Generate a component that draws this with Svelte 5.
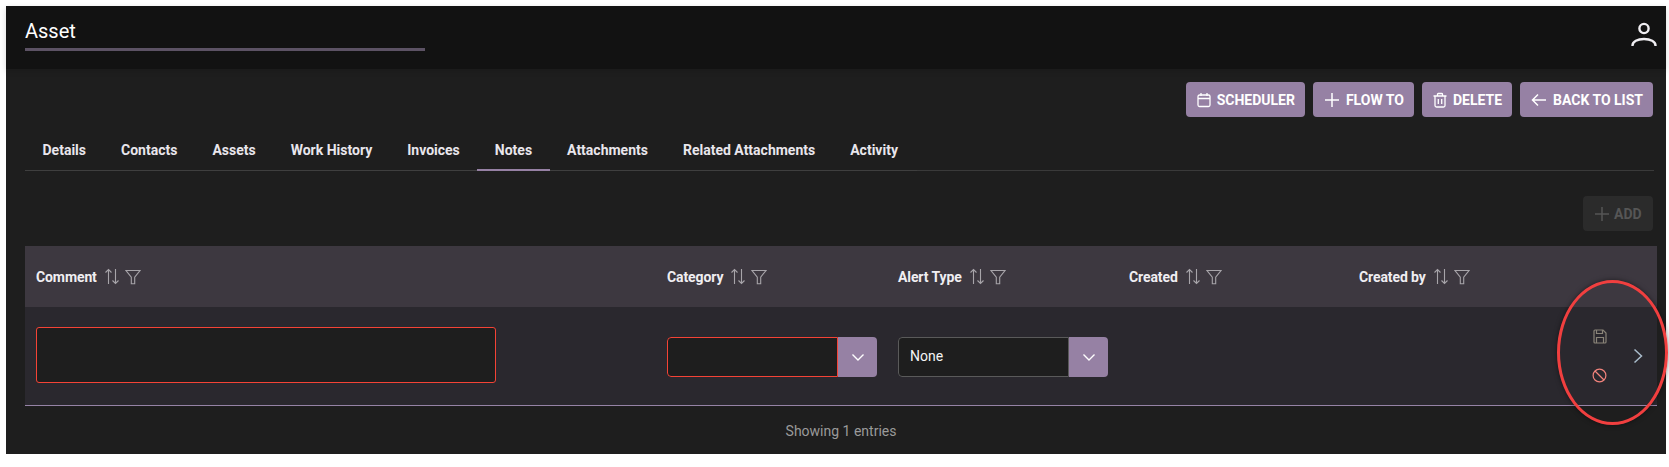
<script lang="ts">
	const tabs = ['Details', 'Contacts', 'Assets', 'Work History', 'Invoices', 'Notes', 'Attachments', 'Related Attachments', 'Activity'];
	const columns = ['Comment', 'Category', 'Alert Type', 'Created', 'Created by'];
	let activeTab = $state('Notes');
</script>

<div class="frame">
	<div class="page">
		<header class="topbar">
			<div class="title">Asset</div>
			<svg class="user" width="28" height="28" viewBox="0 0 28 28" fill="none" stroke="currentColor" stroke-width="2.4">
				<circle cx="14" cy="8.5" r="4.6" />
				<path d="M2.5 26v-.5c0-4 5-6.5 11.5-6.5s11.5 2.500 11.500 6.500v.5" />
			</svg>
		</header>

		<main class="content">
			<div class="actions">
				<button class="btn">
					<svg width="16" height="16" viewBox="0 0 16 16" fill="none" stroke="currentColor" stroke-width="1.3">
						<rect x="2" y="3" width="12" height="11.500" rx="1.500" />
						<path d="M2 6.500h12M5 1v3M11 1v3" />
					</svg>
					SCHEDULER
				</button>
				<button class="btn">
					<svg width="18" height="18" viewBox="0 0 18 18" fill="none" stroke="currentColor" stroke-width="1.500">
						<path d="M9 2v14M2 9h14" />
					</svg>
					FLOW TO
				</button>
				<button class="btn">
					<svg width="16" height="16" viewBox="0 0 16 16" fill="none" stroke="currentColor" stroke-width="1.300">
						<path d="M1.500 4h13M5.500 4V2.300c0-.5.4-.8.8-.8h3.400c.4 0 .8.3.8.8V4M3 4v9.500c0 .8.600 1.500 1.500 1.500h7c.9 0 1.500-.7 1.500-1.500V4M6.300 7v5M9.700 7v5" />
					</svg>
					DELETE
				</button>
				<button class="btn">
					<svg width="18" height="18" viewBox="0 0 18 18" fill="none" stroke="currentColor" stroke-width="1.500">
						<path d="M16 9H2.500M8 3.500 2.500 9 8 14.500" />
					</svg>
					BACK TO LIST
				</button>
			</div>

			<nav class="tabs">
				<div class="tablist">
					{#each tabs as tab}
						<button class="tab" class:active={tab === activeTab} onclick={() => (activeTab = tab)}>{tab}</button>
					{/each}
				</div>
			</nav>

			<div class="toolbar">
				<button class="btn add" disabled>
					<svg width="18" height="18" viewBox="0 0 18 18" fill="none" stroke="currentColor" stroke-width="1.500">
						<path d="M9 2v14M2 9h14" />
					</svg>
					ADD
				</button>
			</div>

			<div class="table">
				<div class="grid head">
					{#each columns as col}
						<div class="th">
							<span>{col}</span>
							<svg class="sort" width="16" height="17" viewBox="0 0 16 17" fill="none" stroke="currentColor" stroke-width="1.100">
								<path d="M4.500 16V1.500M1.500 4.500l3-3 3 3M11.500 1v14.500M8.500 12.500l3 3 3-3" />
							</svg>
							<svg class="funnel" width="16" height="16" viewBox="0 0 16 16" fill="none" stroke="currentColor" stroke-width="1.100">
								<path d="M1 1.500h14l-5.300 6.600v6.700H6.300V8.100z" />
							</svg>
						</div>
					{/each}
					<div></div>
				</div>

				<div class="grid row">
					<div class="td"><div class="textarea"></div></div>
					<div class="td">
						<div class="select invalid">
							<div class="value"></div>
							<div class="trigger">
								<svg width="14" height="14" viewBox="0 0 14 14" fill="none" stroke="currentColor" stroke-width="1.400"><path d="M1.500 4.500 7 10l5.500-5.500" /></svg>
							</div>
						</div>
					</div>
					<div class="td">
						<div class="select">
							<div class="value">None</div>
							<div class="trigger">
								<svg width="14" height="14" viewBox="0 0 14 14" fill="none" stroke="currentColor" stroke-width="1.400"><path d="M1.500 4.500 7 10l5.500-5.500" /></svg>
							</div>
						</div>
					</div>
					<div class="td"></div>
					<div class="td"></div>
					<div class="row-actions">
						<div class="icon-stack">
							<svg class="save" width="14" height="15" viewBox="0 0 14 15" fill="none" stroke="currentColor" stroke-width="1.200">
								<path d="M1 2c0-.6.4-1 1-1h8l3 3v9c0 .6-.4 1-1 1H2c-.6 0-1-.4-1-1z" />
								<path d="M3.500 1v3.500h6V1M3.500 14V8.500h7V14" />
							</svg>
							<svg class="cancel" width="15" height="15" viewBox="0 0 15 15" fill="none" stroke="currentColor" stroke-width="1.200">
								<circle cx="7.500" cy="7.500" r="6.400" />
								<path d="m3 3 9 9" />
							</svg>
						</div>
						<svg class="chevron" width="10" height="16" viewBox="0 0 10 16" fill="none" stroke="currentColor" stroke-width="1.500">
							<path d="m1.500 1.500 7 6.500-7 6.500" />
						</svg>
					</div>
				</div>
			</div>

			<div class="summary">Showing 1 entries</div>
		</main>

		<div class="annotation"></div>
	</div>
</div>

<style>
	:global(body) {
		margin: 0;
		background: #fff;
	}

	.frame {
		height: 467px;
		box-sizing: border-box;
		padding: 6px 3px 13px 6px;
		font-family: Roboto, 'Liberation Sans', sans-serif;
		overflow: hidden;
	}

	.page {
		position: relative;
		height: 100%;
		background: #1e1e1e;
		color: #fff;
	}

	.topbar {
		height: 63px;
		box-sizing: border-box;
		display: flex;
		justify-content: space-between;
		align-items: flex-start;
		padding: 13px 8px 0 19px;
		background: #121212;
		box-shadow: 0 2px 6px rgba(0, 0, 0, 0.15);
	}

	.title {
		width: 400px;
		height: 29px;
		font-size: 20px;
		line-height: 24px;
		border-bottom: 3px solid #5c5264;
	}

	.user {
		color: #f0eef2;
		margin-top: 1px;
	}

	.content {
		padding: 13px 13px 0 19px;
	}

	.actions {
		display: flex;
		justify-content: flex-end;
		gap: 8px;
	}

	.btn {
		height: 35px;
		box-sizing: border-box;
		display: inline-flex;
		align-items: center;
		gap: 5px;
		padding: 0 10px;
		border: 0;
		border-radius: 4px;
		background: #9681a4;
		color: #fff;
		font: 700 14px Roboto, sans-serif;
	}

	.tabs {
		margin-top: 10px;
		margin-right: -1px;
		border-bottom: 1px solid #3a3a3a;
	}

	.tablist {
		display: inline-flex;
		width: 892px;
		border-bottom: 1px solid #3f3f3f;
		margin-bottom: -1px;
	}

	.tab {
		height: 44px;
		box-sizing: border-box;
		padding: 3px 17.500px 0;
		border: 0;
		border-bottom: 2px solid transparent;
		margin-bottom: -1px;
		background: none;
		color: #e9e6ec;
		font: 700 14px Roboto, sans-serif;
		white-space: nowrap;
	}

	.tab.active {
		border-bottom-color: #9681a4;
	}

	.toolbar {
		display: flex;
		justify-content: flex-end;
		margin-top: 25px;
	}

	.btn.add {
		background: #2b2b2b;
		color: #565656;
		width: 70px;
		gap: 3px;
	}

	.table {
		margin-top: 15px;
		margin-right: -4px;
	}

	.grid {
		display: grid;
		grid-template-columns: 631px 231px 231px 230px 231px 1fr;
	}

	.head {
		height: 61px;
		background: #3d3840;
		align-items: center;
	}

	.th {
		display: flex;
		align-items: center;
		gap: 5px;
		padding-left: 11px;
		font-size: 14px;
		font-weight: 700;
		letter-spacing: -0.1px;
		color: #f0eef2;
	}

	.sort,
	.funnel {
		color: #a7a4a9;
	}

	.sort {
		margin-left: 2px;
	}

	.row {
		height: 99px;
		box-sizing: border-box;
		background: #2a282e;
		border-bottom: 1px solid #9683a6;
		align-items: center;
	}

	.td {
		padding-left: 11px;
		min-width: 0;
	}

	.textarea {
		width: 460px;
		height: 56px;
		margin-top: -3px;
		box-sizing: border-box;
		background: #1e1e1e;
		border: 1px solid #f44336;
		border-radius: 3px;
	}

	.select {
		width: 210px;
		height: 40px;
		margin-top: 1px;
		display: flex;
		box-sizing: border-box;
		border-radius: 4px;
		overflow: hidden;
	}

	.value {
		flex: 1;
		box-sizing: border-box;
		background: #1e1e1e;
		border: 1px solid #5a5a5a;
		border-radius: 4px 0 0 4px;
		padding-left: 11px;
		font-size: 14px;
		line-height: 36px;
		color: #f4f4f4;
	}

	.invalid .value {
		border-color: #f44336;
	}

	.trigger {
		width: 39px;
		display: flex;
		align-items: center;
		justify-content: center;
		background: #9681a4;
		color: #fff;
	}

	.row-actions {
		display: flex;
		align-items: center;
		justify-content: flex-end;
		gap: 26px;
		padding-right: 14px;
		margin-left: -60px;
	}

	.icon-stack {
		display: flex;
		flex-direction: column;
		align-items: center;
		gap: 24px;
	}

	.save {
		color: #8a8478;
	}

	.cancel {
		color: #f2837c;
	}

	.chevron {
		color: #a9bccb;
	}

	.summary {
		margin-top: 17px;
		padding-left: 4px;
		text-align: center;
		font-size: 14px;
		color: #9a9a9a;
	}

	/* hand-drawn highlight on top of the screenshot */
	.annotation {
		position: absolute;
		left: 1551px;
		top: 274px;
		width: 111px;
		height: 145px;
		box-sizing: border-box;
		border: 3px solid #f13f3f;
		border-radius: 50%;
		box-shadow: 0 0 5px rgba(0, 0, 0, 0.5);
	}
</style>
